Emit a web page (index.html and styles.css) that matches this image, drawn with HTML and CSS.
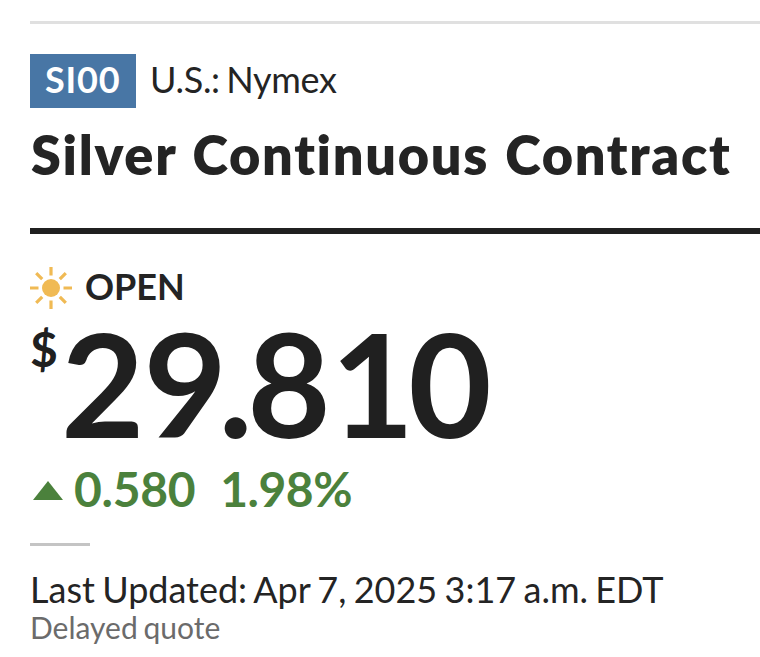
FILE: index.html
```html
<!DOCTYPE html>
<html lang="en">
<head>
    <meta charset="UTF-8">
    <meta name="viewport" content="width=device-width, initial-scale=1.0">
    <title>Silver Continuous Contract</title>
    <link rel="stylesheet" href="styles.css">
</head>
<body>
    <header class="company">
        <div class="ticker">
            <span class="symbol">SI00</span>
            <span class="exchange">U.S.: Nymex</span>
        </div>
        <h1>Silver Continuous Contract</h1>
    </header>
    <main class="quote">
        <div class="status">
            <svg class="sun" viewBox="0 0 42 42">
                <circle cx="21" cy="21" r="9" />
                <path d="M21 0v8.5M21 33.5v8.5M0 21h8.5M33.5 21h8.5M6.2 6.2l6 6M29.8 29.8l6 6M6.2 35.8l6-6M29.8 12.2l6-6" />
            </svg>
            <span>OPEN</span>
        </div>
        <div class="price">
            <sup class="currency">$</sup>
            <span class="value"><span class="first">2</span><span class="nine">9</span><span class="point">.</span>8<span class="one">1</span>0</span>
        </div>
        <div class="change">
            <svg class="arrow" viewBox="0 0 30 19"><path d="M15 0l15 19H0z" /></svg>
            <span class="points">0.580</span>
            <span class="percent">1.98%</span>
        </div>
        <div class="timestamp">
            <p class="updated">Last Updated: Apr 7, 2025 3:17 a.m. EDT</p>
            <p class="delayed">Delayed quote</p>
        </div>
    </main>
</body>
</html>
```
FILE: styles.css
```css
* {
    box-sizing: border-box;
}

body {
    margin: 0;
    padding: 21px 0 0 30px;
    background: #fff;
    color: #242424;
    font-family: Lato, sans-serif;
    overflow: hidden;
}

/* Company name */
.company {
    height: 213px;
    padding-top: 30px;
    border-top: 3px solid #e0e0e0;
    border-bottom: 6px solid #202020;
}

.ticker {
    display: flex;
    gap: 14px;
    height: 54px;
    font-size: 36px;
    line-height: 51px;
    white-space: nowrap;
}

.symbol {
    width: 106px;
    height: 54px;
    padding-left: 15px;
    background: #4876a5;
    color: #fff;
    font-weight: bold;
    letter-spacing: 0.8px;
}

.exchange {
    letter-spacing: -0.3px;
    word-spacing: -2.5px;
}

h1 {
    margin: 15px 0 0 1px;
    font-size: 54px;
    line-height: 64px;
    font-weight: 800;
    letter-spacing: 1.7px;
    word-spacing: 2px;
    font-variant-ligatures: none;
    white-space: nowrap;
}

/* Price */
.status {
    display: flex;
    gap: 13px;
    height: 42px;
    margin-top: 33px;
    font-size: 36px;
    line-height: 38px;
    font-weight: bold;
}

.sun {
    width: 42px;
    height: 42px;
    fill: #f0ba54;
    stroke: #f0ba54;
    stroke-width: 3.2;
}

.sun circle {
    stroke: none;
}

.price {
    display: flex;
    height: 150px;
    color: #202020;
    font-weight: bold;
}

.currency {
    width: 31px;
    font-size: 48px;
    line-height: 80px;
}

.value {
    font-size: 144px;
    line-height: 148px;
}

/* Tighter pairs around the point and the one */
.first {
    letter-spacing: -1px;
}

.nine {
    letter-spacing: -8.5px;
}

.point {
    letter-spacing: -5.5px;
}

.one {
    letter-spacing: -6px;
}

.change {
    display: flex;
    align-items: center;
    height: 60px;
    color: #4b813c;
    font-size: 48px;
    line-height: 58px;
    font-weight: bold;
}

.arrow {
    width: 30px;
    height: 19px;
    margin: 3px 11px 0 3px;
    fill: #4b813c;
}

.points {
    letter-spacing: -0.3px;
}

.percent {
    margin-left: 25px;
    letter-spacing: -0.5px;
}

/* Last update */
.timestamp::before {
    content: "";
    display: block;
    width: 60px;
    height: 3px;
    margin: 24px 0 22px;
    background: #c4c4c4;
}

.timestamp p {
    margin: 0;
    white-space: nowrap;
}

.updated {
    font-size: 36px;
    line-height: 42px;
    word-spacing: -1.9px;
}

.delayed {
    color: #6b6b6b;
    font-size: 30px;
    line-height: 34px;
    word-spacing: -2px;
}
```
